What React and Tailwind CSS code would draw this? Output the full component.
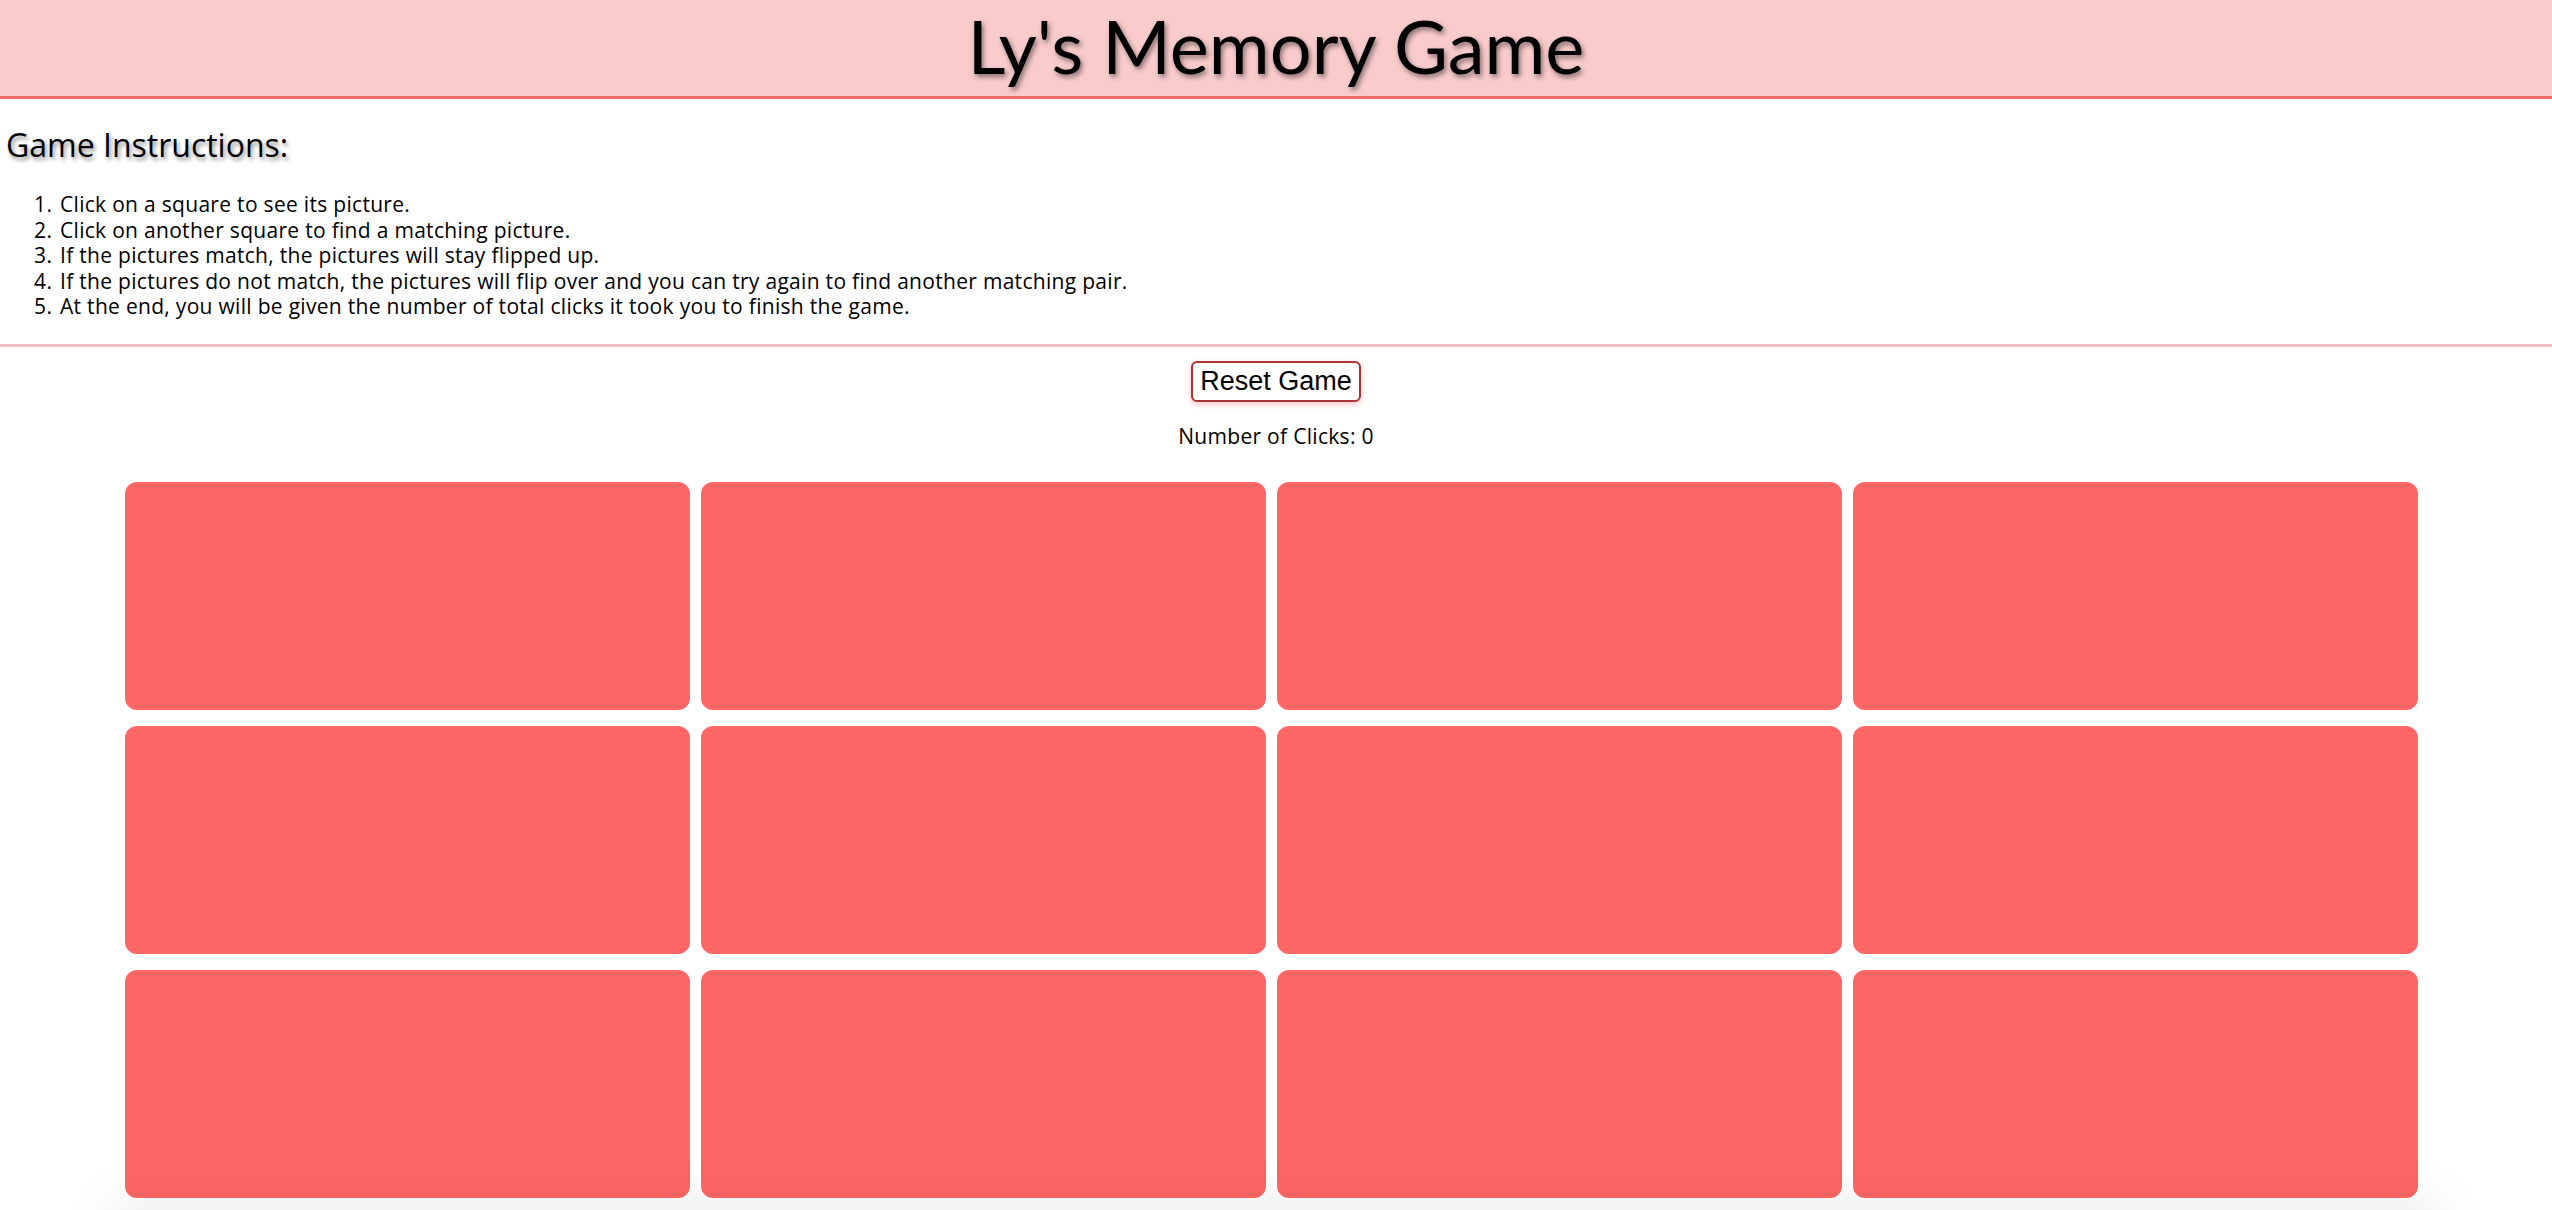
import React, { useState } from 'react';

const steps = [
    'Click on a square to see its picture.',
    'Click on another square to find a matching picture.',
    'If the pictures match, the pictures will stay flipped up.',
    'If the pictures do not match, the pictures will flip over and you can try again to find another matching pair.',
    'At the end, you will be given the number of total clicks it took you to finish the game.',
];

const App = () => {
    const [clicks, setClicks] = useState(0);
    const cards = Array.from({ length: 12 }, (_, i) => i);

    return (
        <div className="min-h-screen bg-white text-black font-['Open_Sans',sans-serif]">
            <header className="h-[99px] bg-[#f9cbcb] border-b-[3px] border-[#f26b6b] flex items-center justify-center">
                <h1 className="text-[74px] leading-none font-normal font-['Lato',sans-serif] [text-shadow:2px_3px_5px_rgba(0,0,0,0.45)] -mt-[4px]">
                    Ly's Memory Game
                </h1>
            </header>

            <section className="pb-[24px] border-b-[3px] border-[#f5bdbd]">
                <h2 className="mt-[26px] pl-[6px] text-[32px] leading-[40px] [text-shadow:2px_3px_4px_rgba(0,0,0,0.45)]">
                    Game Instructions:
                </h2>
                <ol className="mt-[27px] list-decimal pl-[58px] text-[21px] leading-[25.6px] tracking-[0.3px]">
                    {steps.map((s) => (
                        <li key={s} className="pl-[2px]">{s}</li>
                    ))}
                </ol>
            </section>

            <div className="flex flex-col items-center">
                <button
                    onClick={() => setClicks(0)}
                    className="mt-[14px] h-[41px] px-[7px] rounded-[6px] border-2 border-[#a93636] bg-white text-[27px] leading-none font-['Liberation_Sans',sans-serif] shadow-[0_2px_6px_rgba(255,110,110,0.45)]"
                >
                    Reset Game
                </button>
                <p className="mt-[21px] text-[21px] leading-[26px] tracking-[0.3px]">Number of Clicks: {clicks}</p>
            </div>

            <div className="mt-[33px] ml-[125px] w-[2293px] grid grid-cols-4 gap-x-[11px] gap-y-[16px]">
                {cards.map((c) => (
                    <div
                        key={c}
                        onClick={() => setClicks((n) => n + 1)}
                        className="h-[228px] rounded-[12px] bg-[#ff6666] cursor-pointer"
                    />
                ))}
            </div>

            <div className="fixed left-[120px] right-[120px] bottom-[-30px] h-[30px] bg-[#f3f3f3] shadow-[0_0_50px_10px_rgba(0,0,0,0.08)]" />
        </div>
    );
};

export default App;
